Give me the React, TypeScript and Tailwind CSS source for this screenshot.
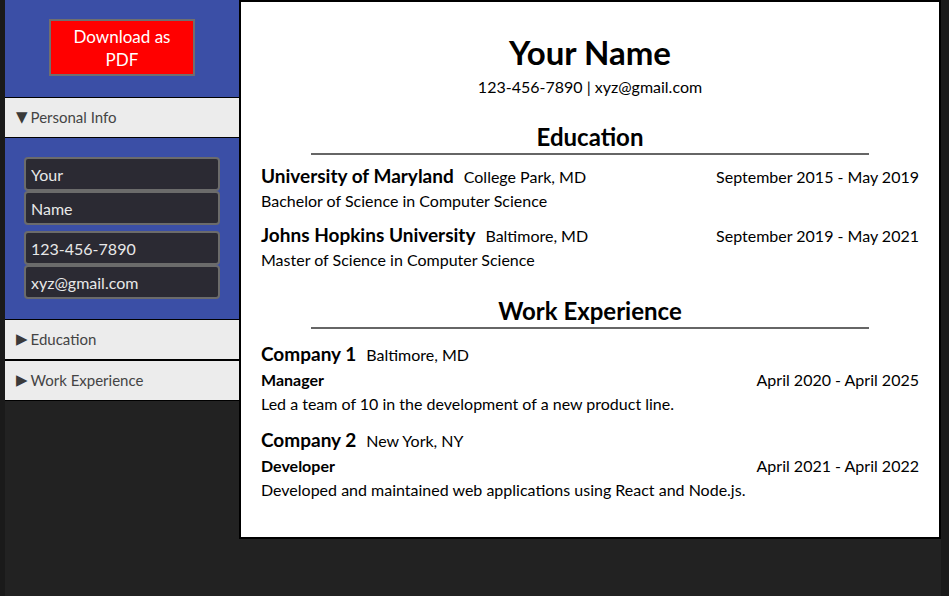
import React from "react"

const education = [
  {
    school: "University of Maryland",
    location: "College Park, MD",
    dates: "September 2015 - May 2019",
    degree: "Bachelor of Science in Computer Science",
  },
  {
    school: "Johns Hopkins University",
    location: "Baltimore, MD",
    dates: "September 2019 - May 2021",
    degree: "Master of Science in Computer Science",
  },
]

const jobs = [
  {
    company: "Company 1",
    location: "Baltimore, MD",
    title: "Manager",
    dates: "April 2020 - April 2025",
    description: "Led a team of 10 in the development of a new product line.",
  },
  {
    company: "Company 2",
    location: "New York, NY",
    title: "Developer",
    dates: "April 2021 - April 2022",
    description: "Developed and maintained web applications using React and Node.js.",
  },
]

function SectionHeader({ open, label }: { open?: boolean; label: string }) {
  return (
    <div className="h-[41px] flex items-center pl-[11px] bg-[#ececec] border-y border-black text-[15px] text-[#444]">
      <span
        className="text-[15px] mr-[3px] text-[#3a3a3a]"
        style={{ fontFamily: "'DejaVu Sans', sans-serif" }}
      >
        {open ? "▼" : "▶"}
      </span>
      {label}
    </div>
  )
}

function Field({ value }: { value: string }) {
  return (
    <input
      readOnly
      value={value}
      className="w-full h-[34px] px-[5px] bg-[#2b2a33] text-[#e8e8e8] text-[16px] border-2 border-[#6b6b6b] rounded-[4px] outline-none"
    />
  )
}

export default function App() {
  return (
    <div
      className="h-[596px] bg-[#1a1a1a] pl-[5px] pr-[8px] overflow-hidden"
      style={{ fontFamily: "Lato, 'Noto Sans', sans-serif" }}
    >
      <div className="h-full flex bg-[#222222]">
        {/* Sidebar */}
        <aside className="w-[234px] shrink-0 flex flex-col">
          <div className="bg-[#3b4fa6] pt-[19px] pb-[21px] flex justify-center">
            <button className="w-[146px] h-[57px] bg-[#ff0000] border-2 border-[#6f6f6f] text-white text-[17px] leading-[23px] px-2">
              Download as PDF
            </button>
          </div>
          <SectionHeader open label="Personal Info" />
          <div className="bg-[#3b4fa6] px-[19px] pt-[19px] pb-[20px] flex flex-col gap-[6px]">
            <div className="flex flex-col">
              <Field value="Your" />
              <Field value="Name" />
            </div>
            <div className="flex flex-col">
              <Field value="123-456-7890" />
              <Field value="xyz@gmail.com" />
            </div>
          </div>
          <SectionHeader label="Education" />
          <SectionHeader label="Work Experience" />
        </aside>

        {/* Resume */}
        <main className="w-[702px] h-[539px] shrink-0 bg-white border-2 border-black px-[20px] pt-[30px] text-black">
          <h1 className="text-[33px] leading-[40px] font-bold text-center">Your Name</h1>
          <p className="text-[16px] leading-[24px] text-center mt-[3px]">123-456-7890 | xyz@gmail.com</p>

          <h2 className="w-[558px] mx-auto mt-[22px] text-[24px] leading-[32px] font-bold text-center border-b-2 border-[#666]">
            Education
          </h2>
          <div className="mt-[8px] flex flex-col gap-[9px]">
            {education.map((e) => (
              <div key={e.school}>
                <div className="flex items-baseline justify-between">
                  <div className="flex items-baseline gap-[10px]">
                    <span className="text-[19px] leading-[26px] font-bold">{e.school}</span>
                    <span className="text-[16px]">{e.location}</span>
                  </div>
                  <span className="text-[16px]">{e.dates}</span>
                </div>
                <div className="text-[16px] leading-[24px]">{e.degree}</div>
              </div>
            ))}
          </div>

          <h2 className="w-[558px] mx-auto mt-[23px] text-[24px] leading-[32px] font-bold text-center border-b-2 border-[#666]">
            Work Experience
          </h2>
          <div className="mt-[11px] flex flex-col gap-[10px]">
            {jobs.map((j) => (
              <div key={j.company}>
                <div className="flex items-baseline gap-[10px]">
                  <span className="text-[19px] leading-[28px] font-bold">{j.company}</span>
                  <span className="text-[16px]">{j.location}</span>
                </div>
                <div className="flex justify-between text-[16px] leading-[24px]">
                  <span className="font-bold">{j.title}</span>
                  <span>{j.dates}</span>
                </div>
                <div className="text-[16px] leading-[24px]">{j.description}</div>
              </div>
            ))}
          </div>
        </main>
      </div>
    </div>
  )
}
